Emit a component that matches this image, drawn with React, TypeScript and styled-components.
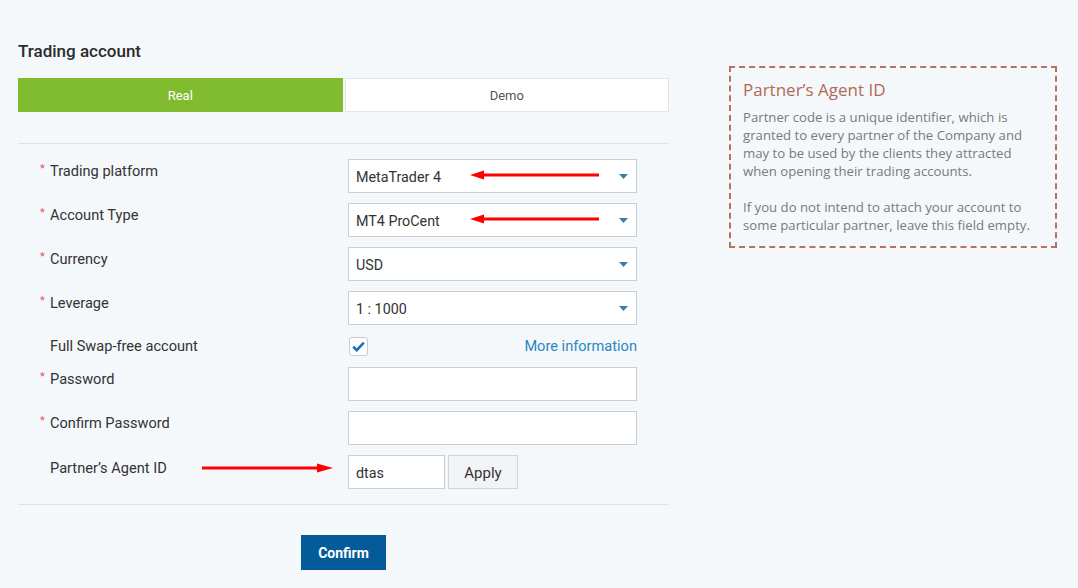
import React from "react";
import styled, { createGlobalStyle } from "styled-components";

const GlobalStyle = createGlobalStyle`
  html, body {
    margin: 0;
    padding: 0;
    background: #f4f8fb;
  }
  body {
    font-family: Roboto, "Liberation Sans", sans-serif;
    color: #333;
  }
`;

type Field = {
  label: string;
  required?: boolean;
  kind: "select" | "input" | "check" | "partner";
  value?: string;
  arrow?: boolean;
};

const fields: Field[] = [
  { label: "Trading platform", required: true, kind: "select", value: "MetaTrader 4", arrow: true },
  { label: "Account Type", required: true, kind: "select", value: "MT4 ProCent", arrow: true },
  { label: "Currency", required: true, kind: "select", value: "USD" },
  { label: "Leverage", required: true, kind: "select", value: "1 : 1000" },
  { label: "Full Swap-free account", kind: "check" },
  { label: "Password", required: true, kind: "input" },
  { label: "Confirm Password", required: true, kind: "input" },
  { label: "Partner’s Agent ID", kind: "partner", value: "dtas" },
];

const LeftArrow = () => (
  <ArrowLeft width="129" height="10" viewBox="0 0 129 10">
    <path d="M0 5 L14 0.5 L14 3.5 L129 3.5 L129 6.5 L14 6.5 L14 9.5 Z" fill="#f00" />
  </ArrowLeft>
);

const RightArrow = () => (
  <ArrowRight width="131" height="10" viewBox="0 0 131 10">
    <path d="M131 5 L115 0.5 L115 3.5 L0 3.5 L0 6.5 L115 6.5 L115 9.5 Z" fill="#f00" />
  </ArrowRight>
);

const App: React.FC = () => {
  const renderControl = (f: Field) => {
    switch (f.kind) {
      case "select":
        return (
          <Select>
            <span>{f.value}</span>
            <Caret width="9" height="5" viewBox="0 0 9 5">
              <path d="M0 0 L9 0 L4.5 5 Z" fill="#3d7fa6" />
            </Caret>
            {f.arrow ? <LeftArrow /> : null}
          </Select>
        );
      case "input":
        return <TextBox />;
      case "check":
        return (
          <CheckRow>
            <CheckBox>
              <svg width="13" height="11" viewBox="0 0 13 11">
                <path d="M1.2 5.8 L4.8 9.2 L11.8 1.6" stroke="#1a72b8" strokeWidth="2.6" fill="none" />
              </svg>
            </CheckBox>
            <MoreLink>More information</MoreLink>
          </CheckRow>
        );
      case "partner":
        return (
          <PartnerRow>
            <TextBox $width={97}>
              <span>{f.value}</span>
            </TextBox>
            <ApplyButton>Apply</ApplyButton>
          </PartnerRow>
        );
    }
  };

  return (
    <>
      <GlobalStyle />
      <Page>
        <Main>
          <Title>Trading account</Title>
          <Tabs>
            <Tab $active>Real</Tab>
            <Tab>Demo</Tab>
          </Tabs>
          <Divider $top={31} />
          <Form>
            {fields.map((f) => (
              <Row key={f.label} $compact={f.kind === "check"}>
                <Label $lower={f.kind === "partner"}>
                  <Star>{f.required ? "*" : ""}</Star>
                  {f.label}
                  {f.kind === "partner" ? <RightArrow /> : null}
                </Label>
                {renderControl(f)}
              </Row>
            ))}
          </Form>
          <Divider $top={15} />
          <Footer>
            <ConfirmButton>Confirm</ConfirmButton>
          </Footer>
        </Main>
        <Aside>
          <AsideTitle>Partner’s Agent ID</AsideTitle>
          <AsideText>
            Partner code is a unique identifier, which is granted to every
            partner of the Company and may to be used by the clients they
            attracted when opening their trading accounts.
          </AsideText>
          <AsideText>
            If you do not intend to attach your account to some particular
            partner, leave this field empty.
          </AsideText>
        </Aside>
      </Page>
    </>
  );
};

const Page = styled.div`
  display: flex;
  align-items: flex-start;
  gap: 60px;
  padding: 40px 18px 0 18px;
`;

const Main = styled.div`
  width: 651px;
  display: flex;
  flex-direction: column;
`;

const Title = styled.h2`
  margin: 0 0 16px 0;
  font-size: 17px;
  line-height: 22px;
  font-weight: 500;
  color: #2b2b2b;
`;

const Tabs = styled.div`
  display: flex;
  gap: 2px;
`;

const Tab = styled.div<{ $active?: boolean }>`
  flex: 1;
  height: 34px;
  box-sizing: border-box;
  display: flex;
  align-items: center;
  justify-content: center;
  font-size: 13px;
  background: ${(p) => (p.$active ? "#81bb2f" : "#fff")};
  color: ${(p) => (p.$active ? "#fff" : "#555")};
  border: 1px solid ${(p) => (p.$active ? "#81bb2f" : "#e2e6ea")};
`;

const Divider = styled.hr<{ $top: number }>`
  margin: ${(p) => p.$top}px 0 0 0;
  border: none;
  border-top: 1px solid #dfe4e9;
  height: 0;
`;

const Form = styled.div`
  display: flex;
  flex-direction: column;
  gap: 10px;
  padding: 15px 0 0 22px;
`;

const Row = styled.div<{ $compact?: boolean }>`
  display: grid;
  grid-template-columns: 308px 289px;
  align-items: ${(p) => (p.$compact ? "center" : "start")};
  min-height: ${(p) => (p.$compact ? "22px" : "34px")};
`;

const Label = styled.div<{ $lower?: boolean }>`
  position: relative;
  font-size: 14.6px;
  line-height: 20px;
  color: #333;
  padding-top: ${(p) => (p.$lower ? "3px" : "0")};
`;

const Star = styled.span`
  display: inline-block;
  width: 10px;
  color: #e2574c;
  font-size: 11px;
  vertical-align: 4px;
`;

const Select = styled.div`
  position: relative;
  height: 34px;
  box-sizing: border-box;
  background: #fff;
  border: 1px solid #c9cfd5;
  display: flex;
  align-items: center;
  justify-content: space-between;
  padding: 0 7px 0 7px;
  font-size: 14.3px;
  color: #333;
  span {
    padding-top: 2px;
  }
`;

const Caret = styled.svg`
  margin-right: 1px;
`;

const ArrowLeft = styled.svg`
  position: absolute;
  left: 121px;
  top: 10px;
`;

const ArrowRight = styled.svg`
  position: absolute;
  left: 162px;
  top: 8px;
`;

const TextBox = styled.div<{ $width?: number }>`
  width: ${(p) => (p.$width ? `${p.$width}px` : "100%")};
  height: 34px;
  box-sizing: border-box;
  background: #fff;
  border: 1px solid #c9cfd5;
  display: flex;
  align-items: center;
  padding: 2px 7px 0 7px;
  font-size: 14.3px;
  color: #333;
`;

const CheckRow = styled.div`
  display: flex;
  align-items: center;
  justify-content: space-between;
`;

const CheckBox = styled.div`
  width: 19px;
  height: 19px;
  box-sizing: border-box;
  margin-left: 1px;
  border: 1px solid #c6ccd2;
  border-radius: 3px;
  background: #fff;
  display: flex;
  align-items: center;
  justify-content: center;
`;

const MoreLink = styled.a`
  font-size: 14.6px;
  color: #2c86c3;
  cursor: pointer;
`;

const PartnerRow = styled.div`
  display: flex;
  gap: 3px;
`;

const ApplyButton = styled.button`
  width: 70px;
  height: 34px;
  background: #f1f3f5;
  border: 1px solid #cfd4d9;
  font-family: Roboto, "Liberation Sans", sans-serif;
  font-size: 15px;
  color: #333;
  padding: 2px 0 0 0;
`;

const Footer = styled.div`
  display: flex;
  justify-content: center;
  padding-top: 30px;
`;

const ConfirmButton = styled.button`
  width: 85px;
  height: 35px;
  background: #055b99;
  border: none;
  color: #fff;
  font-family: Roboto, "Liberation Sans", sans-serif;
  font-size: 14px;
  font-weight: 700;
  padding: 1px 0 0 0;
`;

const Aside = styled.div`
  margin-top: 26px;
  width: 328px;
  box-sizing: border-box;
  border: 2px dashed #b5735f;
  padding: 11px 20px 12px 12px;
  font-family: "Open Sans", "Noto Sans", sans-serif;
`;

const AsideTitle = styled.div`
  font-size: 17px;
  line-height: 22px;
  color: #b06b56;
  margin-bottom: 7px;
`;

const AsideText = styled.p`
  margin: 0 0 18px 0;
  font-size: 13.2px;
  line-height: 18px;
  color: #7a7a7a;
  &:last-child {
    margin-bottom: 0;
  }
`;

export default App;
